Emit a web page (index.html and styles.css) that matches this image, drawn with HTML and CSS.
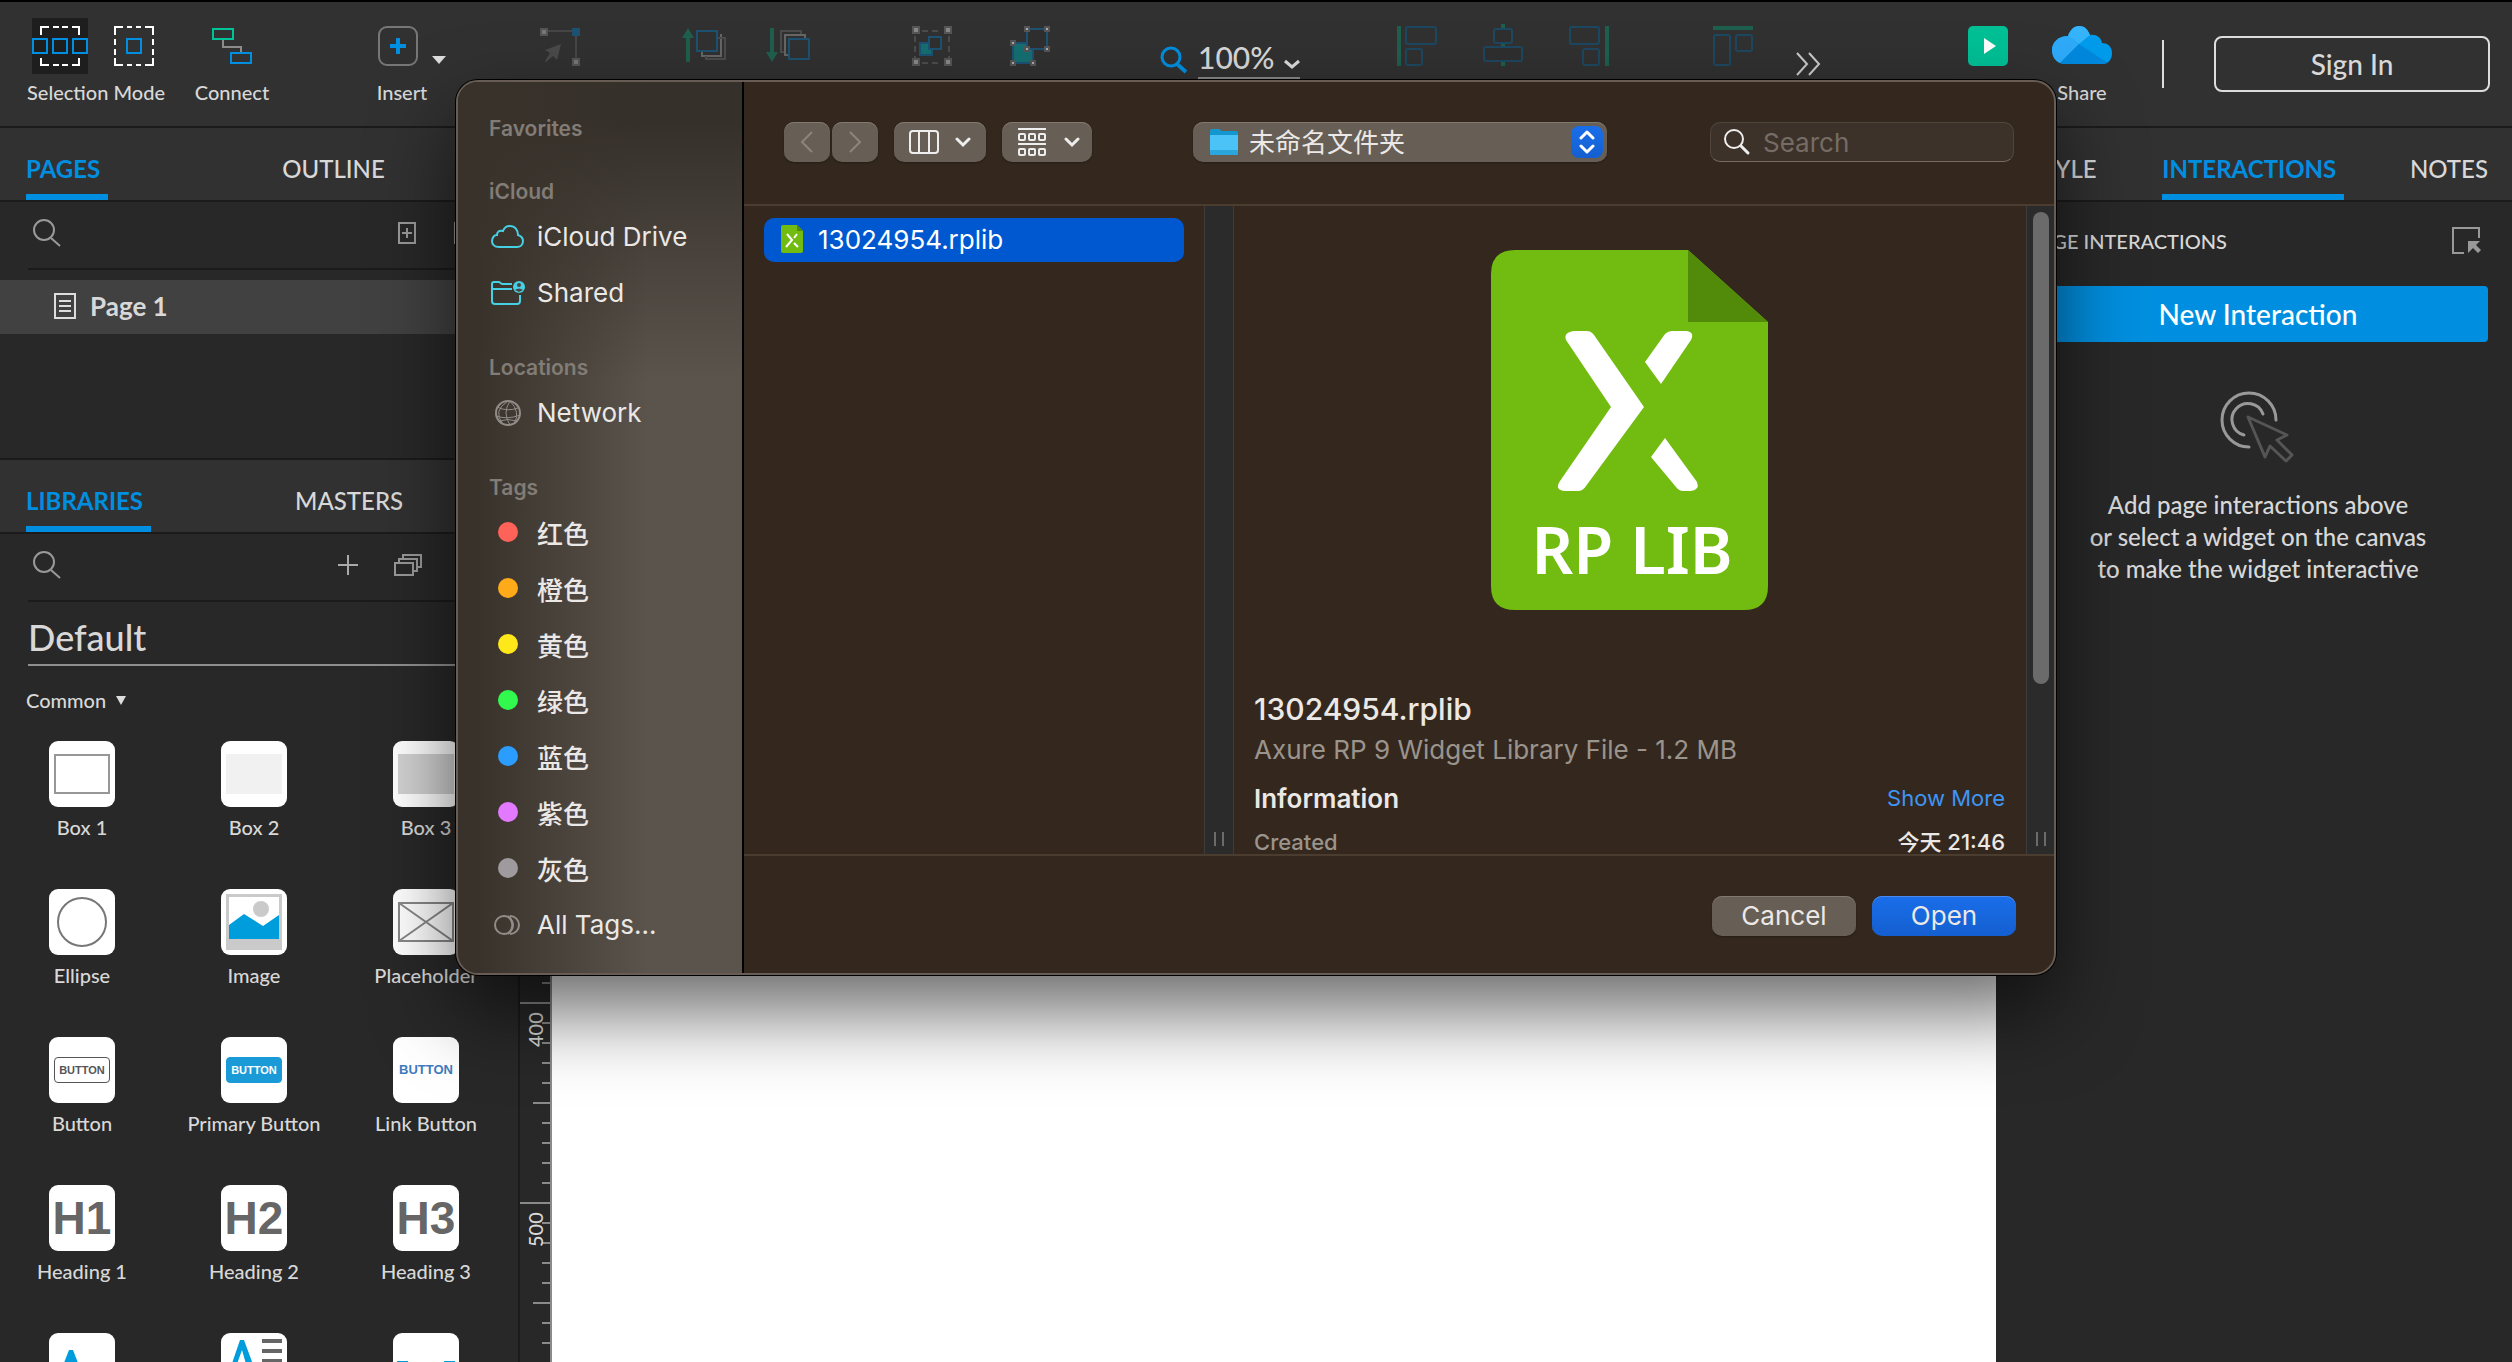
FILE: index.html
```html
<!DOCTYPE html>
<html lang="en">
<head>
<meta charset="utf-8">
<title>Axure RP - Load Library</title>
<link rel="stylesheet" href="styles.css">
</head>
<body>
<div class="app">
  <header class="toolbar">
    <div class="tool tool-selection">
      <div class="tool-icons">
        <button class="icon-button is-active" aria-label="Select intersected">
          <svg width="56" height="56" viewBox="0 0 56 56" fill="none" stroke-width="2"><path d="M9 17V9h8M21 9h6M30 9h6M40 9h7v8M9 40v7h8M21 47h6M30 47h6M40 47h7v-7" stroke="#fff"/><g stroke="#008fe0"><path d="M1 21h14v14H1zM21 21h14v14H21zM41 21h14v14H41z"/></g></svg>
        </button>
        <button class="icon-button" aria-label="Select contained">
          <svg width="40" height="56" viewBox="0 0 40 56" fill="none" stroke-width="2"><path d="M1 17V9h8M13 9h5M22 9h5M31 9h8v8M1 21v6M1 31v6M39 21v6M39 31v6M1 40v7h8M13 47h5M22 47h5M31 47h8v-7" stroke="#fff"/><path d="M13 21h14v14H13z" stroke="#008fe0"/></svg>
        </button>
      </div>
      <span class="tool-label">Selection Mode</span>
    </div>
    <button class="tool tool-connect">
      <svg width="40" height="56" viewBox="0 0 40 56" fill="none" stroke-width="2"><path d="M11 22v7h18v6" stroke="#8c8c8c"/><path d="M1 11h20v10H1z" stroke="#00c39a"/><path d="M19 35h20v10H19z" stroke="#008fe0"/></svg>
      <span class="tool-label">Connect</span>
    </button>
    <button class="tool tool-insert">
      <svg width="76" height="56" viewBox="0 0 76 56" fill="none"><rect x="15" y="9" width="38" height="38" rx="8" stroke="#777" stroke-width="2"/><path d="M34 20v16M26 28h16" stroke="#008fe0" stroke-width="4"/><path d="M68 38h14l-7 8z" fill="#ddd"/></svg>
      <span class="tool-label">Insert</span>
    </button>
    <button class="icon-button tool-point" aria-label="Edit points" disabled>
      <svg width="40" height="56" viewBox="0 0 40 56"><path d="M7 13h26M36 18v22" stroke="#464646" stroke-width="2" fill="none"/><path d="M0 10h8v8H0zM32 40h8v8h-8z" fill="#555"/><path d="M2 12h4v4H2zM34 42h4v4h-4z" fill="#777"/><path d="M32 10h8v8h-8z" fill="#1d5272"/><path d="M21 26l-4 16-4-4-7 6-1-1 5-8-5-3z" fill="#4a4a4a"/></svg>
    </button>
    <div class="tool-row tool-order">
      <button class="icon-button" aria-label="Bring to front" disabled>
        <svg width="44" height="56" viewBox="0 0 44 56" fill="none" stroke-width="2"><path d="M6 18v26" stroke="#1f5f4e" stroke-width="4"/><path d="M0 20l6-10 6 10z" fill="#1f5f4e"/><path d="M39 16v22H20v-4" stroke="#666"/><path d="M36 20h7v21H24v-3" stroke="#4c4c4c"/><path d="M15 13h20v20H15z" stroke="#1d5272"/></svg>
      </button>
      <button class="icon-button" aria-label="Send to back" disabled>
        <svg width="44" height="56" viewBox="0 0 44 56" fill="none" stroke-width="2"><path d="M6 10v26" stroke="#1f5f4e" stroke-width="4"/><path d="M0 34l6 10 6-10z" fill="#1f5f4e"/><path d="M18 34h-3V13h20v4" stroke="#4c4c4c"/><path d="M22 37h-3V17h20v3" stroke="#666"/><path d="M23 21h20v20H23z" stroke="#1d5272"/></svg>
      </button>
    </div>
    <div class="tool-row tool-group">
      <button class="icon-button" aria-label="Group" disabled>
        <svg width="40" height="56" viewBox="0 0 40 56" fill="none"><path d="M3 18v22M37 18v22M10 13h20M10 45h20" stroke="#4c4c4c" stroke-width="2" stroke-dasharray="6 4"/><path d="M8 25h12v12H8z" fill="#156f72" stroke="#1d5272" stroke-width="2"/><path d="M17 19h12v12H17z" fill="#2f2f2f" stroke="#1d5272" stroke-width="2"/><path d="M0 8h8v8H0zM32 8h8v8h-8zM0 40h8v8H0zM32 40h8v8h-8z" fill="#555"/><path d="M2 10h4v4H2zM34 10h4v4h-4zM2 42h4v4H2zM34 42h4v4h-4z" fill="#888"/></svg>
      </button>
      <button class="icon-button" aria-label="Ungroup" disabled>
        <svg width="40" height="56" viewBox="0 0 40 56" fill="none"><path d="M3 25h20v20H3z" fill="#156f72" stroke="#1d5272" stroke-width="2"/><path d="M17 11h20v20H17z" fill="#2f2f2f" stroke="#1d5272" stroke-width="2"/><path d="M14 8h6v6h-6zM34 8h6v6h-6zM14 28h6v6h-6zM34 28h6v6h-6zM0 22h6v6H0zM0 42h6v6H0zM20 42h6v6h-6z" fill="#555"/><path d="M16 10h2v2h-2zM36 10h2v2h-2zM16 30h2v2h-2zM36 30h2v2h-2zM2 24h2v2H2zM2 44h2v2H2zM22 44h2v2h-2z" fill="#aaa"/></svg>
      </button>
    </div>
    <div class="tool-row zoom">
      <svg width="28" height="28" viewBox="0 0 28 28" fill="none" stroke="#008fe0"><circle cx="11" cy="11" r="9" stroke-width="3"/><path d="M17 18l9 8" stroke-width="4"/></svg>
      <button class="zoom-value">100%
        <svg width="16" height="10" viewBox="0 0 16 10" fill="none" stroke="#ddd" stroke-width="3"><path d="M1 2l7 6 7-6"/></svg>
      </button>
    </div>
    <div class="tool-row tool-align">
      <button class="icon-button" aria-label="Align left" disabled>
        <svg width="40" height="56" viewBox="0 0 40 56" fill="none" stroke="#1d4861" stroke-width="2"><path d="M2 8v40" stroke="#1f5f4e" stroke-width="4"/><rect x="9" y="9" width="30" height="17" rx="2"/><rect x="9" y="31" width="16" height="16" rx="2"/></svg>
      </button>
      <button class="icon-button" aria-label="Align center" disabled>
        <svg width="40" height="56" viewBox="0 0 40 56" stroke="#1d4861" stroke-width="2"><path d="M20 6v42" stroke="#1f5f4e" stroke-width="4"/><g fill="#2f2f2f"><rect x="11" y="11" width="18" height="14" rx="2"/><rect x="1" y="29" width="38" height="14" rx="2"/></g></svg>
      </button>
      <button class="icon-button" aria-label="Align right" disabled>
        <svg width="40" height="56" viewBox="0 0 40 56" fill="none" stroke="#1d4861" stroke-width="2"><path d="M38 8v40" stroke="#1f5f4e" stroke-width="4"/><rect x="1" y="9" width="29" height="17" rx="2"/><rect x="14" y="31" width="16" height="16" rx="2"/></svg>
      </button>
    </div>
    <button class="icon-button tool-top" aria-label="Align top" disabled>
      <svg width="40" height="56" viewBox="0 0 40 56" fill="none" stroke="#1d4861" stroke-width="2"><path d="M0 10h40" stroke="#1f5f4e" stroke-width="4"/><rect x="1" y="17" width="16" height="30" rx="2"/><rect x="23" y="17" width="16" height="16" rx="2"/></svg>
    </button>
    <button class="icon-button tool-more" aria-label="More tools">
      <svg width="26" height="24" viewBox="0 0 26 24" fill="none" stroke="#ccc" stroke-width="2"><path d="M2 1l10 11L2 23M14 1l10 11-10 11"/></svg>
    </button>
    <button class="icon-button tool-preview" aria-label="Preview">
      <svg width="40" height="56" viewBox="0 0 40 56"><rect y="8" width="40" height="40" rx="5" fill="#00c096"/><path d="M16 20l12 8-12 8z" fill="#fff"/></svg>
    </button>
    <button class="tool tool-share">
      <svg width="60" height="56" viewBox="0 0 60 56"><path d="M12 46C4 45 0 39 0 32c0-8 7-14 16-14 2-6 6-10 11-10 6 0 9 4 11 9 6-1 11 2 12 8 6 0 10 4 10 10 0 7-4 11-10 11z" fill="#009bec"/><path d="M8 45C3 43 0 38 0 32c0-8 7-14 16-14l11 8z" fill="#2eaaf9"/><path d="M16 18c2-6 6-10 11-10 6 0 8 3 11 9L27 26z" fill="#36b4fb"/><path d="M8 45l19-19 29 19-6 1H12z" fill="#0088dc"/></svg>
      <span class="tool-label">Share</span>
    </button>
    <span class="toolbar-divider"></span>
    <button class="sign-in">Sign In</button>
  </header>

  <div class="workspace">
    <aside class="left-panel">
      <section class="pages">
        <nav class="tabs tabs-pages">
          <button class="tab is-current">PAGES</button>
          <button class="tab">OUTLINE</button>
        </nav>
        <div class="search-row">
          <svg width="28" height="28" viewBox="0 0 28 28" fill="none" stroke="#999" stroke-width="2"><circle cx="11" cy="11" r="10"/><path d="M18 19l9 8"/></svg>
          <div class="search-actions">
            <button class="icon-button" aria-label="Add page"><svg width="20" height="24" viewBox="0 0 20 24" fill="none" stroke="#999" stroke-width="2"><path d="M1 2h16v20H1zM9 7v10M4 12h10"/></svg></button>
            <button class="icon-button" aria-label="Add folder"><svg width="28" height="24" viewBox="0 0 28 24" fill="none" stroke="#999" stroke-width="2"><path d="M1 2h10l3 4h12v16H1z"/></svg></button>
          </div>
        </div>
        <button class="page-row">
          <svg width="24" height="28" viewBox="0 0 24 28" fill="none" stroke="#ddd" stroke-width="2"><path d="M1 2h20v24H1zM5 9h12M5 14h12M5 19h12"/></svg>
          Page 1
        </button>
      </section>
      <section class="libraries">
        <nav class="tabs tabs-libraries">
          <button class="tab is-current">LIBRARIES</button>
          <button class="tab">MASTERS</button>
        </nav>
        <div class="search-row">
          <svg width="28" height="28" viewBox="0 0 28 28" fill="none" stroke="#999" stroke-width="2"><circle cx="11" cy="11" r="10"/><path d="M18 19l9 8"/></svg>
          <div class="search-actions search-actions-libraries">
            <button class="icon-button" aria-label="Add library"><svg width="20" height="20" viewBox="0 0 20 20" stroke="#aaa" stroke-width="2"><path d="M10 0v20M0 10h20"/></svg></button>
            <button class="icon-button" aria-label="Library options"><svg width="28" height="24" viewBox="0 0 28 24" fill="none" stroke="#999" stroke-width="2"><path d="M1 10h18v12H1zM5 9V6h18v12h-3M9 5V2h18v12h-3"/></svg></button>
          </div>
        </div>
        <select class="library-select" aria-label="Library"><option>Default</option></select>
        <button class="library-group">Common <span class="caret"></span></button>
        <ul class="widgets">
          <li class="widget"><svg width="66" height="66" viewBox="0 0 66 66"><rect width="66" height="66" rx="9" fill="#fff"/><path d="M6 14h54v38H6z" fill="none" stroke="#979797" stroke-width="2"/></svg>Box 1</li>
          <li class="widget"><svg width="66" height="66" viewBox="0 0 66 66"><rect width="66" height="66" rx="9" fill="#fff"/><path d="M5 13h56v40H5z" fill="#f1f1f1"/></svg>Box 2</li>
          <li class="widget"><svg width="66" height="66" viewBox="0 0 66 66"><rect width="66" height="66" rx="9" fill="#fff"/><path d="M5 13h56v40H5z" fill="#d2d2d2"/></svg>Box 3</li>
          <li class="widget"><svg width="66" height="66" viewBox="0 0 66 66"><rect width="66" height="66" rx="9" fill="#fff"/><circle cx="33" cy="33" r="24" fill="none" stroke="#777" stroke-width="2"/></svg>Ellipse</li>
          <li class="widget"><svg width="66" height="66" viewBox="0 0 66 66"><rect width="66" height="66" rx="9" fill="#fff"/><path d="M5 5h56v56H5z" fill="#cacaca"/><path d="M8 8h50v42H8z" fill="#fff"/><circle cx="40" cy="20" r="8" fill="#cacaca"/><path d="M8 36l15-11 19 12 16-11v24H8z" fill="#009ddc"/></svg>Image</li>
          <li class="widget"><svg width="66" height="66" viewBox="0 0 66 66"><rect width="66" height="66" rx="9" fill="#fff"/><path d="M6 14h54v38H6zl54 38M60 14L6 52" fill="none" stroke="#888" stroke-width="2"/></svg>Placeholder</li>
          <li class="widget"><span class="tile"><span class="mini-button">BUTTON</span></span>Button</li>
          <li class="widget"><span class="tile"><span class="mini-button mini-primary">BUTTON</span></span>Primary Button</li>
          <li class="widget"><span class="tile"><span class="mini-link">BUTTON</span></span>Link Button</li>
          <li class="widget"><span class="tile tile-heading">H1</span>Heading 1</li>
          <li class="widget"><span class="tile tile-heading">H2</span>Heading 2</li>
          <li class="widget"><span class="tile tile-heading">H3</span>Heading 3</li>
          <li class="widget"><svg width="66" height="66" viewBox="0 0 66 66"><rect width="66" height="66" rx="9" fill="#fff"/><path d="M20 17h4l14 36h-7l-3-8H16l-3 8H6z" fill="#009ddc"/></svg></li>
          <li class="widget"><svg width="66" height="66" viewBox="0 0 66 66"><rect width="66" height="66" rx="9" fill="#fff"/><path d="M19 7h4l14 38h-9l-3-8H15l-3 8H6zM21 17l-5 14h9z" fill="#009ddc" fill-rule="evenodd"/><path d="M41 8h20M41 18h20M41 28h20M41 38h20" stroke="#666" stroke-width="4"/></svg></li>
          <li class="widget"><svg width="66" height="66" viewBox="0 0 66 66"><rect width="66" height="66" rx="9" fill="#fff"/><path d="M5 38v-9h10M51 29h10v9" fill="none" stroke="#009ddc" stroke-width="2"/></svg></li>
        </ul>
      </section>
    </aside>
    <main class="canvas">
      <ol class="ruler"><li>0</li><li>100</li><li>200</li><li>300</li><li>400</li><li>500</li></ol>
      <div class="sheet"></div>
    </main>
    <aside class="right-panel">
      <nav class="tabs tabs-inspector">
        <button class="tab">STYLE</button>
        <button class="tab is-current">INTERACTIONS</button>
        <button class="tab">NOTES</button>
      </nav>
      <div class="inspector">
        <div class="inspector-head">
          <h2>PAGE INTERACTIONS</h2>
          <button class="icon-button" aria-label="Select target"><svg width="36" height="28" viewBox="0 0 36 28"><path d="M12 26H1V1h26v10" fill="none" stroke="#999" stroke-width="2"/><path d="M16 14h12l-4 4 5 5-3 3-5-5-5 5z" fill="#999"/></svg></button>
        </div>
        <button class="new-interaction">New Interaction</button>
        <svg class="click-art" width="76" height="76" viewBox="0 0 76 76" fill="none" stroke-width="3" stroke-linecap="round" stroke-linejoin="round"><path d="M29 56A27 27 0 1 1 56 29" stroke="#999"/><path d="M24 44A16 16 0 1 1 43 23" stroke="#999"/><path d="M28 26l39 18-10 5 15 15-6 6-16-15-5 11z" stroke="#555"/></svg>
        <p class="hint">Add page interactions above<br>or select a widget on the canvas<br>to make the widget interactive</p>
      </div>
    </aside>
  </div>
</div>

<div class="sheet-layer">
  <section class="dialog" role="dialog" aria-label="Open">
    <nav class="places">
      <h3>Favorites</h3>
      <h3>iCloud</h3>
      <a href="#"><svg width="36" height="28" viewBox="0 0 36 28" fill="none" stroke="#45d0e6" stroke-width="2"><path d="M9 24C4 24 2 21 2 18c0-3 2-6 5-6 0-3 2-5 6-4 1-3 4-5 7-5 5 0 8 4 8 9 3 1 5 3 5 6 0 4-3 6-6 6z"/></svg>iCloud Drive</a>
      <a href="#"><svg width="36" height="28" viewBox="0 0 36 28" fill="none" stroke="#45d0e6" stroke-width="2"><path d="M22 5H12L9 3H4C3 3 2 4 2 5v17c0 2 1 3 3 3h22c2 0 3-1 3-3v-6M2 10h20"/><circle cx="29" cy="8" r="6" fill="#45d0e6" stroke="none"/><circle cx="29" cy="6" r="2" fill="#4b4640" stroke="none"/><path d="M25 11q4-3 8 0l-4 2z" fill="#4b4640" stroke="none"/></svg>Shared</a>
      <h3>Locations</h3>
      <a href="#"><svg width="36" height="28" viewBox="0 0 36 28" fill="none" stroke="#918c87" stroke-width="2"><circle cx="18" cy="14" r="12"/><path d="M20 2q-8 12 0 24M18 2q-16 10-5 23M20 2q11 11 4 23M7 8q10 5 21 1M6 17q12 4 24-1M9 22q9-3 18 0" stroke-width="1"/></svg>Network</a>
      <h3>Tags</h3>
      <a class="tag" href="#"><span class="dot dot-red"></span>红色</a>
      <a class="tag" href="#"><span class="dot dot-orange"></span>橙色</a>
      <a class="tag" href="#"><span class="dot dot-yellow"></span>黄色</a>
      <a class="tag" href="#"><span class="dot dot-green"></span>绿色</a>
      <a class="tag" href="#"><span class="dot dot-blue"></span>蓝色</a>
      <a class="tag" href="#"><span class="dot dot-purple"></span>紫色</a>
      <a class="tag" href="#"><span class="dot dot-gray"></span>灰色</a>
      <a href="#"><svg width="36" height="28" viewBox="0 0 36 28" fill="none" stroke="#918c87" stroke-width="2"><circle cx="14" cy="14" r="9"/><path d="M20 5a9 9 0 0 1 0 18M18 5q9 9 0 18"/></svg>All Tags...</a>
    </nav>
    <div class="browser">
      <header class="browser-bar">
        <div class="history">
          <button class="mac-button" aria-label="Back" disabled><svg width="14" height="24" viewBox="0 0 14 24" fill="none" stroke="#8d857d" stroke-width="2"><path d="M12 2L2 12l10 10"/></svg></button>
          <button class="mac-button" aria-label="Forward" disabled><svg width="14" height="24" viewBox="0 0 14 24" fill="none" stroke="#8d857d" stroke-width="2"><path d="M2 2l10 10L2 22"/></svg></button>
        </div>
        <button class="mac-button view-button" aria-label="Column view">
          <svg width="30" height="24" viewBox="0 0 30 24" fill="none" stroke="#eee" stroke-width="2"><rect x="1" y="1" width="28" height="22" rx="3"/><path d="M10 1v22M20 1v22"/></svg>
          <svg width="16" height="12" viewBox="0 0 16 12" fill="none" stroke="#eee" stroke-width="3" stroke-linecap="round"><path d="M2 3l6 6 6-6"/></svg>
        </button>
        <button class="mac-button group-button" aria-label="Group items">
          <svg width="28" height="28" viewBox="0 0 28 28" fill="none" stroke="#eee" stroke-width="2"><path d="M0 1h28M0 16h28"/><rect x="1" y="6" width="6" height="6" rx="1"/><rect x="11" y="6" width="6" height="6" rx="1"/><rect x="21" y="6" width="6" height="6" rx="1"/><rect x="1" y="21" width="6" height="6" rx="1"/><rect x="11" y="21" width="6" height="6" rx="1"/><rect x="21" y="21" width="6" height="6" rx="1"/></svg>
          <svg width="16" height="12" viewBox="0 0 16 12" fill="none" stroke="#eee" stroke-width="3" stroke-linecap="round"><path d="M2 3l6 6 6-6"/></svg>
        </button>
        <button class="mac-button folder-button">
          <svg width="30" height="28" viewBox="0 0 30 28"><path d="M1 3q0-2 2-2h7l3 2h15q1 0 1 2v8H1z" fill="#1497cf"/><path d="M1 7h28v18q0 2-2 2H3q-2 0-2-2z" fill="#4cc3f7"/><path d="M1 22h28v3q0 2-2 2H3q-2 0-2-2z" fill="#2aa6dd"/></svg>
          <span class="folder-name">未命名文件夹</span>
          <span class="stepper"><svg width="16" height="24" viewBox="0 0 16 24" fill="none" stroke="#fff" stroke-width="3" stroke-linecap="round" stroke-linejoin="round"><path d="M2 8l6-6 6 6M2 16l6 6 6-6"/></svg></span>
        </button>
        <label class="search-box">
          <svg width="28" height="28" viewBox="0 0 28 28" fill="none" stroke="#eee" stroke-linecap="round"><circle cx="11" cy="11" r="9" stroke-width="2"/><path d="M18 18l7 7" stroke-width="3"/></svg>
          <input type="text" placeholder="Search" aria-label="Search">
        </label>
      </header>
      <div class="columns">
        <div class="file-column">
          <button class="file-row">
            <svg width="22" height="28" viewBox="0 0 22 28"><path d="M2 0h14l6 6v20q0 2-2 2H2q-2 0-2-2V2q0-2 2-2z" fill="#72bb10"/><path d="M16 0v6h6z" fill="#528b0a"/><path d="M6 9l5 6-6 7M16 9l-3 4M13 18l4 4" fill="none" stroke="#fff" stroke-width="2"/></svg>
            13024954.rplib
          </button>
        </div>
        <div class="scroller"><span class="grip"></span></div>
        <article class="preview">
          <svg class="file-art" width="277" height="360" viewBox="0 0 277 360"><path d="M24 0H197L277 72V336q0 24-24 24H24Q0 360 0 336V24Q0 0 24 0z" fill="#72bb10"/><path d="M197 0l80 72h-80z" fill="#528b0a"/><g fill="#fff"><path d="M84 81H96q4 0 7 4L153 157 95 236q-3 5-8 5H74q-11-1-5-10L120 157 75 90q-3-8 9-9z"/><path d="M181 81h14q9 1 5 9L170 134 154 112 174 84q3-3 7-3z"/><path d="M174 188l32 44q3 8-6 9H192q-4 0-7-4L160 207z"/></g><text class="art-text" x="141" y="324" text-anchor="middle" fill="#fff">RP LIB</text></svg>
          <h1>13024954.rplib</h1>
          <p class="kind">Axure RP 9 Widget Library File - 1.2 MB</p>
          <div class="info-row"><h2>Information</h2><a href="#">Show More</a></div>
          <div class="info-row info-created"><span>Created</span><b>今天 21:46</b></div>
        </article>
        <div class="scroller scroller-end"><span class="thumb"></span><span class="grip"></span></div>
      </div>
      <footer class="browser-foot">
        <button class="mac-button foot-button">Cancel</button>
        <button class="mac-button foot-button primary">Open</button>
      </footer>
    </div>
  </section>
</div>
</body>
</html>
```
FILE: styles.css
```css
* { box-sizing: border-box; }

body {
  margin: 0;
  height: 100vh;
  overflow: hidden;
  background: #282828;
  color: #d8d8d8;
  font-family: Lato, "Noto Sans CJK SC", sans-serif;
  font-weight: 500;
}

button, input, select {
  margin: 0;
  padding: 0;
  border: 0;
  background: none;
  color: inherit;
  font: inherit;
}

h1, h2, h3, p, ul, ol { margin: 0; padding: 0; list-style: none; }
a { text-decoration: none; color: inherit; }
svg { display: block; flex: none; }

.app { display: flex; flex-direction: column; height: 100%; }

/* Toolbar */
.toolbar {
  display: flex;
  align-items: flex-start;
  flex: none;
  height: 128px;
  padding: 16px 22px 0 26px;
  border-top: 2px solid #000;
  border-bottom: 2px solid #1b1b1b;
  background: #313131;
}
.tool { display: flex; flex-direction: column; align-items: center; flex: none; }
.tool svg { overflow: visible; }
.tool-label { margin-top: 6px; font-size: 20px; line-height: 24px; white-space: nowrap; }
.tool-icons { display: flex; gap: 26px; padding-right: 6px; }
.tool-row { display: flex; flex: none; }
.icon-button { flex: none; }
.icon-button.is-active { background: #1e1e1e; }
.tool-selection { width: 140px; }
.tool-connect { width: 80px; margin-left: 26px; }
.tool-insert { width: 76px; margin-left: 92px; }
.tool-point { margin-left: 100px; }
.tool-order { gap: 40px; margin-left: 102px; }
.tool-group { gap: 58px; margin-left: 102px; }
.zoom { gap: 10px; margin: 26px 0 0 110px; }
.zoom svg { margin-top: 2px; }
.zoom-value {
  display: flex;
  align-items: flex-start;
  justify-content: space-between;
  width: 102px;
  height: 35px;
  border-bottom: 2px solid #888;
  font-size: 30px;
  line-height: 26px;
}
.zoom .zoom-value svg { margin-top: 15px; }
.tool-align { gap: 46px; margin-left: 97px; }
.tool-top { margin-left: 104px; }
.tool-more { margin: 34px 0 0 42px; }
.tool-preview { margin-left: auto; }
.tool-share { width: 60px; margin-left: 44px; }
.toolbar-divider { width: 2px; height: 48px; margin: 22px 50px 0; background: #ddd; }
.sign-in {
  width: 276px;
  height: 56px;
  margin-top: 18px;
  border: 2px solid #ddd;
  border-radius: 8px;
  font-size: 28px;
}

.workspace { display: flex; flex: 1; min-height: 0; }

/* Tabs */
.tabs {
  display: flex;
  height: 74px;
  padding: 0 24px 0 26px;
  border-bottom: 2px solid #1b1b1b;
  background: #313131;
}
.tab {
  height: 72px;
  padding-top: 16px;
  border-bottom: 6px solid transparent;
  font-size: 24px;
  line-height: 50px;
  text-align: left;
}
.tab.is-current { padding-right: 8px; border-color: #008fe0; color: #008fe0; font-weight: 700; }
.tabs-pages { gap: 174px; }
.tabs-libraries { gap: 144px; }
.tabs-inspector { justify-content: space-between; padding-left: 32px; }

/* Left panel */
.left-panel { flex: none; width: 518px; overflow: hidden; }
.pages { height: 332px; border-bottom: 2px solid #1b1b1b; }
.search-row {
  display: flex;
  align-items: center;
  justify-content: space-between;
  height: 68px;
  margin-left: 28px;
  padding: 0 36px 4px 5px;
  border-bottom: 2px solid #1b1b1b;
}
.search-actions { display: flex; gap: 36px; }
.search-actions-libraries { align-items: center; padding-right: 60px; }
.page-row {
  display: flex;
  align-items: center;
  gap: 12px;
  width: 100%;
  height: 54px;
  margin-top: 10px;
  padding: 0 0 2px 54px;
  background: #414141;
  font-size: 26px;
  font-weight: 700;
}
.library-select {
  display: block;
  width: 490px;
  height: 64px;
  margin-left: 28px;
  padding-top: 8px;
  border-bottom: 2px solid #8f8f8f;
  appearance: none;
  font-size: 36px;
}
.library-group {
  display: flex;
  align-items: center;
  gap: 10px;
  height: 28px;
  margin: 20px 0 27px 26px;
  font-size: 20px;
}
.caret { border: 5px solid transparent; border-top: 9px solid #ddd; border-bottom: 0; }
.widgets {
  display: grid;
  grid-template-columns: repeat(3, 152px);
  gap: 48px 20px;
  padding-left: 6px;
}
.widget {
  display: flex;
  flex-direction: column;
  align-items: center;
  gap: 6px;
  font-size: 20px;
  line-height: 28px;
  white-space: nowrap;
}
.tile {
  display: flex;
  align-items: center;
  justify-content: center;
  width: 66px;
  height: 66px;
  border-radius: 9px;
  background: #fff;
  font-family: "Liberation Sans", sans-serif;
  font-weight: 700;
}
.tile-heading { color: #666; font-size: 46px; }
.mini-button {
  width: 56px;
  height: 26px;
  border: 1px solid #555;
  border-radius: 4px;
  color: #555;
  font-size: 11px;
  line-height: 24px;
  text-align: center;
}
.mini-primary { border-color: #1a9ad7; background: #1a9ad7; color: #fff; }
.mini-link { color: #3d7cc0; font-size: 13px; }

/* Canvas */
.canvas { display: flex; flex: 1; min-width: 0; }
.ruler {
  flex: none;
  width: 34px;
  padding-top: 74px;
  border-left: 2px solid #1b1b1b;
  border-right: 2px solid #8a8a8a;
  background:
    repeating-linear-gradient(#8a8a8a 0 2px, transparent 2px 200px) 0 74px / 30px 1400px no-repeat,
    repeating-linear-gradient(#8a8a8a 0 2px, transparent 2px 100px) 100% 74px / 17px 1400px no-repeat,
    repeating-linear-gradient(#8a8a8a 0 2px, transparent 2px 20px) 100% 14px / 8px 1400px no-repeat;
  font-size: 20px;
}
.ruler li {
  height: 200px;
  padding-bottom: 10px;
  line-height: 30px;
  text-align: right;
  writing-mode: vertical-rl;
  transform: rotate(180deg);
}
.sheet { flex: 1; background: #fff; }

/* Right panel */
.right-panel { flex: none; width: 516px; }
.inspector { padding: 0 24px 0 32px; }
.inspector-head { display: flex; align-items: center; justify-content: space-between; height: 84px; padding-bottom: 6px; }
.inspector-head h2 { font-size: 20px; font-weight: 500; }
.new-interaction {
  width: 100%;
  height: 56px;
  border-radius: 4px;
  background: #008fe0;
  color: #fff;
  font-size: 28px;
}
.click-art { margin: 49px auto 22px; }
.hint { font-size: 24px; line-height: 32px; text-align: center; white-space: nowrap; }

/* Open dialog */
.sheet-layer {
  position: absolute;
  inset: 80px 0 0;
  display: flex;
  justify-content: center;
  align-items: flex-start;
}
.dialog {
  display: flex;
  width: 1600px;
  overflow: hidden;
  border: 2px solid #685d54;
  border-radius: 22px;
  background: #34281e;
  box-shadow: 0 0 0 1px #000, 0 36px 80px rgba(0, 0, 0, 0.6);
  color: #ebe8e6;
  font-family: Inter, "Noto Sans CJK SC", sans-serif;
  font-size: 26px;
  font-weight: 400;
}
.places {
  flex: none;
  width: 286px;
  padding-bottom: 20px;
  border-right: 2px solid #000;
  background:
    linear-gradient(to right, #38322b 0, #38322b 20px, rgba(56, 50, 43, 0) 190px),
    linear-gradient(#36302a 0, #36302a 40px, #5a544d 300px);
}
.places h3 {
  height: 64px;
  padding: 30px 0 0 31px;
  color: #827c76;
  font-size: 21px;
  font-weight: 600;
  line-height: 34px;
}
.places h3:first-child { height: 63px; }
.places a {
  display: flex;
  align-items: center;
  gap: 11px;
  height: 56px;
  padding: 0 0 1px 32px;
}
.places .tag { padding-bottom: 2px; font-weight: 500; }
.dot { width: 20px; height: 20px; margin: 0 8px; border-radius: 50%; }
.dot-red { background: #ff6259; }
.dot-orange { background: #ffab19; }
.dot-yellow { background: #ffe81a; }
.dot-green { background: #32f94d; }
.dot-blue { background: #2b9dff; }
.dot-purple { background: #e279ff; }
.dot-gray { background: #9e9a9e; }

.browser { display: flex; flex: 1; flex-direction: column; min-width: 0; }
.browser-bar {
  display: flex;
  align-items: center;
  height: 124px;
  padding: 0 40px;
  padding-bottom: 2px;
  border-bottom: 2px solid #4a3c2f;
}
.mac-button {
  display: flex;
  align-items: center;
  justify-content: center;
  height: 40px;
  border-radius: 10px;
  background: #675e55;
  box-shadow: inset 0 1px #82796f, 0 1px 2px rgba(0, 0, 0, 0.3);
}
.history { display: flex; gap: 2px; }
.history .mac-button { width: 46px; }
.view-button { gap: 16px; width: 92px; margin-left: 16px; }
.group-button { gap: 18px; width: 90px; margin-left: 16px; padding-left: 4px; }
.folder-button { gap: 10px; width: 414px; margin-left: 101px; padding: 0 4px 0 16px; justify-content: flex-start; }
.folder-name { padding-bottom: 4px; }
.stepper {
  display: flex;
  align-items: center;
  justify-content: center;
  width: 32px;
  height: 32px;
  margin-left: auto;
  border-radius: 8px;
  background: linear-gradient(#1a6eea, #145fd0);
}
.search-box {
  display: flex;
  align-items: center;
  gap: 12px;
  width: 304px;
  height: 40px;
  margin-left: auto;
  padding-left: 12px;
  border: 1px solid #51463c;
  border-bottom-color: #756b62;
  border-radius: 10px;
  background: #3d3229;
}
.search-box input { width: 240px; outline: 0; }
.search-box input::placeholder { color: #756c65; opacity: 1; }

.columns { display: flex; height: 648px; }
.file-column { flex: 1; padding: 12px 20px; }
.file-row {
  display: flex;
  align-items: center;
  gap: 15px;
  width: 100%;
  height: 44px;
  padding: 0 0 2px 17px;
  border-radius: 10px;
  background: #0058d0;
  color: #fff;
}
.scroller {
  display: flex;
  flex: none;
  flex-direction: column;
  align-items: center;
  justify-content: flex-end;
  width: 30px;
  padding-bottom: 8px;
  border: solid #3f3d3b;
  border-width: 0 1px;
  background: #2b2b2b;
}
.grip { width: 10px; height: 14px; border: solid #6b6b6b; border-width: 0 2px; }
.scroller-end { width: 28px; justify-content: space-between; padding-top: 6px; border-right: 0; }
.thumb { width: 16px; height: 472px; border-radius: 8px; background: #6b6b6b; }
.preview { flex: none; width: 792px; overflow: hidden; padding: 44px 21px 0 20px; }
.file-art { margin: 0 auto 78px; }
.art-text { font-family: "Noto Sans", sans-serif; font-size: 65px; font-weight: 600; }
.preview h1 { font-size: 30px; font-weight: 500; line-height: 42px; }
.kind { color: #9b948d; line-height: 40px; }
.info-row { display: flex; align-items: center; justify-content: space-between; height: 56px; }
.info-row h2 { font-size: 26px; font-weight: 600; }
.info-row a { color: #3f95f5; font-size: 22px; }
.info-created { height: 32px; font-size: 22px; line-height: 28px; font-weight: 500; }
.info-created span { color: #9b948d; }
.info-created b { font-weight: 500; }

.browser-foot {
  display: flex;
  flex: 1;
  justify-content: flex-end;
  gap: 16px;
  padding: 40px 38px 0;
  border-top: 2px solid #4a3c2f;
}
.foot-button { width: 144px; padding-bottom: 2px; }
.primary { background: linear-gradient(#1a6eea, #145fd0); box-shadow: inset 0 1px #4a8af0; }
```
